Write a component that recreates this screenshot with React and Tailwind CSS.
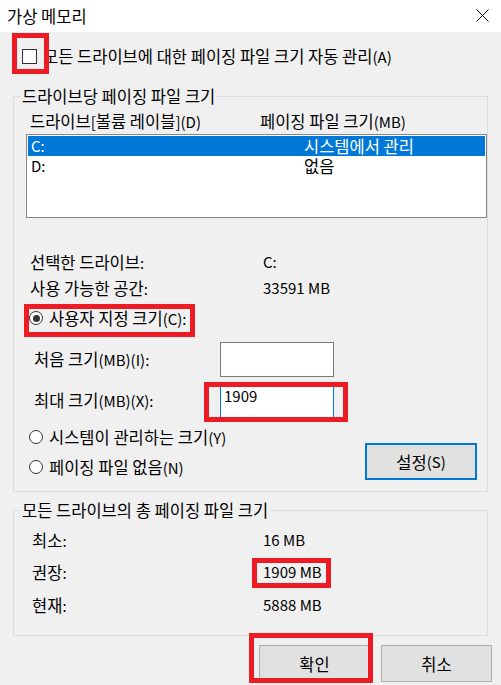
import React from 'react';

const FONT = "font-['Noto_Sans_CJK_KR','Noto_Sans',sans-serif]";

// Hangul runs are set a bit larger than the latin text, like Malgun Gothic next to Segoe
const k = (str) =>
  str.split(/([가-힣][가-힣 ]*[가-힣]|[가-힣])/).map((part, i) =>
    /[가-힣]/.test(part) ? (
      <span key={i} className="text-[16.5px]">{part}</span>
    ) : (
      part
    )
  );

// red annotation boxes drawn over the dialog
const Mark = ({ className }) => (
  <div className={`pointer-events-none absolute border-[5px] border-[#ed1c24] ${className}`} />
);

const Group = ({ title, className, children }) => (
  <div className={`relative mx-[13px] border border-[#dcdcdc] ${className}`}>
    <span className="absolute left-[6px] -top-[11px] bg-[#f0f0f0] px-[2px] leading-[20px] whitespace-nowrap">{k(title)}</span>
    {children}
  </div>
);

const Radio = ({ checked }) => (
  <span className="flex h-[14px] w-[14px] shrink-0 items-center justify-center rounded-full border border-[#333333] bg-white">
    {checked && <span className="h-[7px] w-[7px] rounded-full bg-[#333333]" />}
  </span>
);

const InfoRow = ({ label, value, className }) => (
  <div className={`flex h-[20px] ${className}`}>
    <span className="w-[233px]">{k(label)}</span>
    <span>{k(value)}</span>
  </div>
);

export default function App() {
  return (
    <div className={`relative h-[685px] w-[501px] overflow-hidden bg-[#f0f0f0] text-[15px] leading-[20px] text-black ${FONT}`}>
      {/* title bar */}
      <div className="flex h-[32px] items-center justify-between bg-white pl-[7px] pr-[12px]">
        <span>{k('가상 메모리')}</span>
        <svg width="13" height="13" viewBox="0 0 13 13" className="mt-[-1px]">
          <path d="M0.5 0.5 L12.5 12.5 M12.5 0.5 L0.5 12.5" stroke="#000" strokeWidth="1" />
        </svg>
      </div>

      <div className="mt-[14px] flex h-[20px] items-center pl-[22px]">
        <span className="h-[15px] w-[15px] shrink-0 border border-[#333333] bg-white" />
        <span className="ml-[6px] whitespace-nowrap">{k('모든 드라이브에 대한 페이징 파일 크기 자동 관리(A)')}</span>
      </div>

      <Group title="드라이브당 페이징 파일 크기" className="mt-[30px] h-[396px]">
        <div className="mt-[14px] flex h-[20px] pl-[16px]">
          <span className="w-[230px]">{k('드라이브[볼륨 레이블](D)')}</span>
          <span>{k('페이징 파일 크기(MB)')}</span>
        </div>

        <div className="ml-[12px] mt-[3px] h-[84px] w-[461px] border border-[#828790] bg-white p-[1px]">
          <div className="flex h-[20px] bg-[#0078d7] pl-[3px] text-white">
            <span className="w-[273px]">C:</span>
            <span>{k('시스템에서 관리')}</span>
          </div>
          <div className="flex h-[20px] pl-[3px]">
            <span className="w-[273px]">D:</span>
            <span>{k('없음')}</span>
          </div>
        </div>

        <InfoRow label="선택한 드라이브:" value="C:" className="mt-[34px] pl-[16px]" />
        <InfoRow label="사용 가능한 공간:" value="33591 MB" className="mt-[6px] pl-[16px]" />

        <div className="mt-[10px] flex h-[20px] items-center pl-[15px]">
          <Radio checked />
          <span className="ml-[6px]">{k('사용자 지정 크기(C):')}</span>
        </div>

        <div className="mt-[14px] flex h-[35px] items-center pl-[20px]">
          <span className="w-[186px]">{k('처음 크기(MB)(I):')}</span>
          <div className="h-[35px] w-[114px] border border-[#7a7a7a] bg-white" />
        </div>
        <div className="mt-[6px] flex h-[35px] items-center pl-[20px]">
          <span className="w-[186px]">{k('최대 크기(MB)(X):')}</span>
          <div className="h-[35px] w-[114px] self-start border border-[#0078d7] bg-white pl-[3px] pt-[2px]">1909</div>
        </div>

        <div className="mt-[9px] flex items-start justify-between">
          <div className="flex flex-col pl-[15px]">
            <div className="flex h-[20px] items-center">
              <Radio />
              <span className="ml-[6px]">{k('시스템이 관리하는 크기(Y)')}</span>
            </div>
            <div className="mt-[10px] flex h-[20px] items-center">
              <Radio />
              <span className="ml-[6px]">{k('페이징 파일 없음(N)')}</span>
            </div>
          </div>
          <button className="mr-[10px] mt-[16px] flex h-[37px] w-[112px] items-center justify-center border-2 border-[#0078d7] bg-[#e1e1e1]">
            {k('설정(S)')}
          </button>
        </div>
      </Group>

      <Group title="모든 드라이브의 총 페이징 파일 크기" className="mt-[18px] h-[126px]">
        <div className="mt-[19px] flex h-[20px] pl-[18px]">
          <span className="w-[231px]">{k('최소:')}</span>
          <span>16 MB</span>
        </div>
        <div className="mt-[12px] flex h-[20px] pl-[18px]">
          <span className="w-[231px]">{k('권장:')}</span>
          <span>1909 MB</span>
        </div>
        <div className="mt-[13px] flex h-[20px] pl-[18px]">
          <span className="w-[231px]">{k('현재:')}</span>
          <span>5888 MB</span>
        </div>
      </Group>

      <div className="mt-[9px] flex justify-end gap-[11px] pr-[9px]">
        <button className="flex h-[37px] w-[111px] items-center justify-center border border-[#adadad] bg-[#e1e1e1]">{k('확인')}</button>
        <button className="flex h-[37px] w-[111px] items-center justify-center border border-[#adadad] bg-[#e1e1e1]">{k('취소')}</button>
      </div>

      <Mark className="left-[12px] top-[33px] h-[41px] w-[37px]" />
      <Mark className="left-[24px] top-[304px] h-[33px] w-[171px]" />
      <Mark className="left-[204px] top-[382px] h-[40px] w-[144px]" />
      <Mark className="left-[252px] top-[558px] h-[30px] w-[79px]" />
      <Mark className="left-[249px] top-[633px] h-[50px] w-[124px]" />
    </div>
  );
}
